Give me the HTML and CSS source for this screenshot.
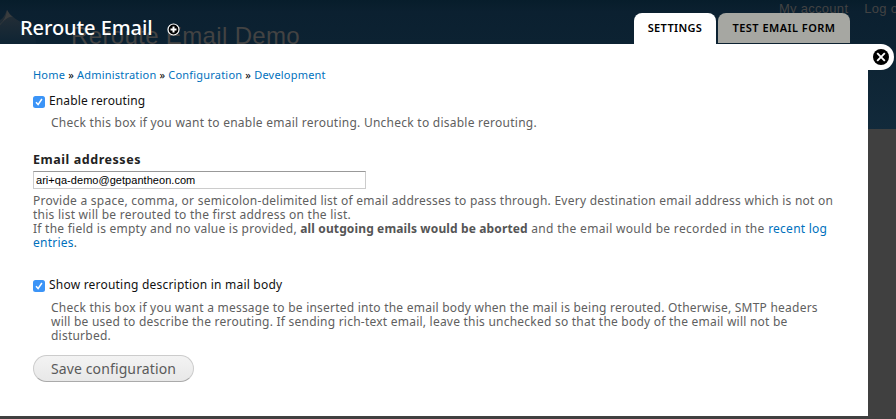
FILE: index.html
```
<!DOCTYPE html>
<html lang="en">
<head>
<meta charset="utf-8">
<title>Reroute Email</title>
<link rel="stylesheet" href="styles.css">
</head>
<body>
<div class="site" aria-hidden="true">
  <div class="site-header">
    <svg class="drop" width="37" height="44" viewBox="0 0 37 44"><defs><linearGradient id="d" x1="0" y1="0" x2="0" y2="1"><stop offset="0.2" stop-color="#222d36"/><stop offset="1" stop-color="#0e2434"/></linearGradient></defs><path d="M0 20C4 18 5 14 7 10C10 17 20 21 28 27C34 32 36 38 36 44H0Z" fill="url(#d)"/><path d="M0 24C4 21 6 16 7 10C9 13 10 15 13 17C8 16 5 20 0 25Z" fill="#393c3e"/></svg>
    <div class="site-name">Reroute Email Demo</div>
    <div class="user-links"><span>My account</span><span>Log out</span></div>
  </div>
</div>
<div class="overlay">
  <header class="titlebar">
    <h1>Reroute Email</h1>
    <svg class="add" width="13" height="13" viewBox="0 0 13 13"><circle cx="6.5" cy="6.5" r="5.5" fill="#000" stroke="#fff" stroke-width="1.2"/><path d="M6.5 3.5v6M3.5 6.5h6" stroke="#fff" stroke-width="2"/></svg>
    <nav class="tabs"><a class="tab active">SETTINGS</a><a class="tab test">TEST EMAIL FORM</a></nav>
  </header>
  <div class="body-row">
    <main class="panel">
      <div class="breadcrumb"><a>Home</a> » <a>Administration</a> » <a>Configuration</a> » <a>Development</a></div>
      <div class="check-row first"><svg class="box" width="12" height="12" viewBox="0 0 12 12"><rect width="12" height="12" rx="2.5" fill="#3b94f7"/><path d="M3 6.3L5.1 8.6L8.9 3" fill="none" stroke="#fff" stroke-width="1.5"/></svg><span class="label l1">Enable rerouting</span></div>
      <div class="desc indent d1">Check this box if you want to enable email rerouting. Uncheck to disable rerouting.</div>
      <div class="field-label">Email addresses</div>
      <input class="field" type="text" value="ari+qa-demo@getpantheon.com" spellcheck="false">
      <div class="desc help">Provide a space, comma, or semicolon-delimited list of email addresses to pass through. Every destination email address which is not on<br>this list will be rerouted to the first address on the list.<br>If the field is empty and no value is provided, <b>all outgoing emails would be aborted</b><span class="wide"> and the email would be recorded in the </span><a>recent log</a><br><a>entries</a>.</div>
      <div class="check-row second"><svg class="box" width="12" height="12" viewBox="0 0 12 12"><rect width="12" height="12" rx="2.5" fill="#3b94f7"/><path d="M3 6.3L5.1 8.6L8.9 3" fill="none" stroke="#fff" stroke-width="1.5"/></svg><span class="label l2">Show rerouting description in mail body</span></div>
      <div class="desc indent d2">Check this box if you want a message to be inserted into the email body when the mail is being rerouted. Otherwise, SMTP headers<br>will be used to describe the rerouting. If sending rich-text email, leave this unchecked so that the body of the email will not be<br>disturbed.</div>
      <button class="save">Save configuration</button>
    </main>
    <div class="close"><svg width="16" height="16" viewBox="0 0 16 16"><circle cx="8" cy="8" r="8" fill="#000"/><path d="M4.2 4.2L11.8 11.8M11.8 4.2L4.2 11.8" stroke="#fff" stroke-width="1.9"/></svg></div>
  </div>
</div>
</body>
</html>
```
FILE: styles.css
```
* { box-sizing: border-box; }
body { margin: 0; width: 896px; height: 419px; overflow: hidden; background: #404040; font-family: "Noto Sans", sans-serif; position: relative; }
.site { position: absolute; inset: 0; overflow: hidden; font-family: "Liberation Sans", sans-serif; color: #434343; }
.site-header { height: 129px; background: linear-gradient(#071d2b 0, #0b2030 12px, #0c2232 44px, #122a3b 129px); position: relative; }
.drop { position: absolute; left: 0; top: 0; }
.site-name { position: absolute; left: 71px; top: 21px; font-size: 24px; letter-spacing: 0.35px; line-height: 30px; white-space: nowrap; }
.user-links { position: absolute; left: 779px; top: 1px; font-size: 13px; letter-spacing: 0.28px; line-height: 16px; display: flex; gap: 16px; white-space: nowrap; }
.overlay { position: relative; height: 416px; display: flex; flex-direction: column; }
.titlebar { height: 44px; flex: none; display: flex; padding-left: 20px; }
h1 { margin: 0; padding-top: 14px; width: 147px; font-weight: 500; font-size: 20px; line-height: 27px; letter-spacing: -0.08px; color: #fff; white-space: nowrap; }
.add { margin-top: 23px; flex: none; }
.tabs { display: flex; gap: 2px; margin-left: 454px; padding-top: 13px; }
.tab { height: 30px; width: 132px; border-radius: 8px 8px 0 0; background: #a6a7a2; color: #000; font-weight: 600; font-size: 11px; letter-spacing: 0.45px; line-height: 30px; text-align: center; white-space: nowrap; }
.tab.active { width: 82px; height: 31px; background: #fff; letter-spacing: 0.35px; }
.body-row { flex: 1; display: flex; align-items: flex-start; }
.panel { width: 868px; height: 372px; background: #fff; padding: 24px 0 0 33px; white-space: nowrap; }
a { color: #0071bd; }
.breadcrumb { font-size: 11px; letter-spacing: 0.2px; line-height: 14px; color: #000; }
.check-row { display: flex; align-items: flex-start; gap: 4px; height: 14px; font-size: 12px; line-height: 14px; color: #111; }
.label { letter-spacing: 0.21px; }
.l1 { letter-spacing: 0.13px; }
.box { margin-top: 2px; flex: none; }
.first { margin-top: 12px; }
.desc { font-size: 12px; letter-spacing: 0.25px; line-height: 14px; color: #606060; }
.desc b { color: #555; letter-spacing: 0.13px; }
.wide { letter-spacing: 0.32px; }
.indent { padding-left: 18px; }
.d1 { margin-top: 8px; }
.field-label { margin-top: 23px; font-size: 12.5px; letter-spacing: 0.55px; line-height: 14px; font-weight: 700; color: #222; }
.field { display: block; width: 333px; height: 18px; margin-top: 4px; padding: 0 2px; border: 1px solid #ccc; border-top-color: #999; font: 11px "Liberation Sans", sans-serif; letter-spacing: 0.04px; color: #000; background: #fff; outline: 0; }
.help { margin-top: 5px; }
.second { margin-top: 28px; }
.d2 { margin-top: 9px; letter-spacing: 0.23px; }
.save { display: block; width: 161px; height: 27px; margin-top: 12px; padding: 0; border: 1px solid #ccc; border-bottom-color: #aaa; border-radius: 14px; background: linear-gradient(#f3f3f3, #e8e8e8); color: #5a5a5a; font: 14px/24px "Noto Sans", sans-serif; letter-spacing: 0.12px; }
.close { width: 26px; height: 26px; background: #fff; border-radius: 0 13px 13px 0; padding: 5px; }
.close svg { display: block; }
```
